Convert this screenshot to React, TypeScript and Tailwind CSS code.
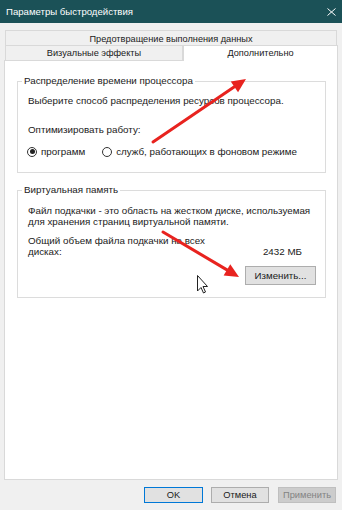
const font = "font-['Liberation_Sans',_Arial,_sans-serif]";

function Arrow({ x1, y1, x2, y2 }: { x1: number; y1: number; x2: number; y2: number }) {
  const ang = Math.atan2(y2 - y1, x2 - x1);
  const len = 14;
  const half = 6.5;
  const bx = x2 - len * Math.cos(ang);
  const by = y2 - len * Math.sin(ang);
  const px = -Math.sin(ang) * half;
  const py = Math.cos(ang) * half;
  return (
    <g>
      <line x1={x1} y1={y1} x2={bx} y2={by} stroke="#e8231f" strokeWidth={3} strokeLinecap="round" />
      <polygon points={`${x2},${y2} ${bx + px},${by + py} ${bx - px},${by - py}`} fill="#e8231f" />
    </g>
  );
}

function Radio({ checked, label }: { checked: boolean; label: string }) {
  return (
    <label className="flex items-center gap-[4px]">
      <span className="w-[10px] h-[10px] rounded-full border border-[#333] bg-white flex items-center justify-center">
        {checked && <span className="w-[5px] h-[5px] rounded-full bg-[#222]" />}
      </span>
      <span>{label}</span>
    </label>
  );
}

export default function App() {
  return (
    <div className={`relative w-[342px] h-[510px] bg-[#f0f0f0] overflow-hidden text-[9.8px] leading-[11px] text-[#1a1a1a] whitespace-nowrap ${font}`}>
      {/* заголовок окна */}
      <div className="h-[23px] bg-[#1b5157] flex items-center justify-between pl-[6px] pr-[6px] text-white text-[9.6px]">
        <span>Параметры быстродействия</span>
        <svg width="9" height="8" viewBox="0 0 9 8">
          <path d="M0.5 0.5 L8.5 7.5 M8.5 0.5 L0.5 7.5" stroke="#fff" strokeWidth="1" />
        </svg>
      </div>

      {/* вкладки */}
      <div className="pt-[7px] text-[9.2px]">
        <div className="ml-[5px] w-[332px] h-[15px] border border-b-0 border-[#d9d9d9] flex items-center justify-center pt-[2px]">
          Предотвращение выполнения данных
        </div>
        <div className="flex items-end ml-[5px] w-[333px]">
          <div className="w-[178px] h-[15px] border border-b-0 border-[#d9d9d9] flex items-center justify-center">
            Визуальные эффекты
          </div>
          <div className="flex-1 h-[16px] bg-white border border-b-0 border-[#d9d9d9] flex items-center justify-center mb-[-1px] relative z-10">
            Дополнительно
          </div>
        </div>
      </div>

      {/* содержимое */}
      <div className="ml-[4px] w-[334px] h-[420px] bg-white border border-[#d9d9d9] pt-[12px] pl-[12px]">
        <fieldset className="min-w-0 w-[309px] h-[100px] border border-[#dcdcdc] pl-[10px]">
          <legend className="ml-[-6px] px-[2px] leading-[16px]">Распределение времени процессора</legend>
          <div className="pt-[6px]">Выберите способ распределения ресурсов процессора.</div>
          <div className="pt-[18px]">Оптимизировать работу:</div>
          <div className="pt-[11px] flex gap-[17px] ml-[-1px]">
            <Radio checked label="программ" />
            <Radio checked={false} label="служб, работающих в фоновом режиме" />
          </div>
        </fieldset>

        <fieldset className="min-w-0 mt-[9px] w-[309px] h-[116px] border border-[#dcdcdc] pl-[10px] pr-[9px]">
          <legend className="ml-[-6px] px-[2px] leading-[16px]">Виртуальная память</legend>
          <div className="pt-[7px]">
            Файл подкачки - это область на жестком диске, используемая
            <br />
            для хранения страниц виртуальной памяти.
          </div>
          <div className="pt-[8px] flex items-end justify-between pr-[14px]">
            <div>
              Общий объем файла подкачки на всех
              <br />
              дисках:
            </div>
            <div>2432 МБ</div>
          </div>
          <div className="flex justify-end pt-[9px]">
            <button className="w-[71px] h-[19px] bg-[#e1e1e1] border border-[#adadad] text-[9.7px] leading-[11px]">
              Изменить...
            </button>
          </div>
        </fieldset>
      </div>

      {/* кнопки */}
      <div className="flex justify-end pr-[6px] pt-[7px] text-[9.3px] leading-[11px]">
        <button className="w-[59px] h-[16px] bg-[#e1e1e1] border border-[#0078d7]">OK</button>
        <button className="ml-[8px] w-[58px] h-[16px] bg-[#e1e1e1] border border-[#adadad]">Отмена</button>
        <button className="ml-[9px] w-[58px] h-[16px] bg-[#cccccc] border border-[#bfbfbf] text-[#838383]">Применить</button>
      </div>

      {/* стрелки и курсор поверх */}
      <svg className="absolute left-0 top-0 pointer-events-none" width="342" height="510">
        <Arrow x1={153} y1={142} x2={246} y2={79} />
        <Arrow x1={163} y1={232} x2={239} y2={277} />
        <path d="M197.5 275.5 L197.5 291 L201 287.5 L203.5 293 L205.5 292 L203 286.5 L207.5 286.5 Z" fill="#fff" stroke="#222" strokeWidth="1" />
      </svg>
    </div>
  );
}
